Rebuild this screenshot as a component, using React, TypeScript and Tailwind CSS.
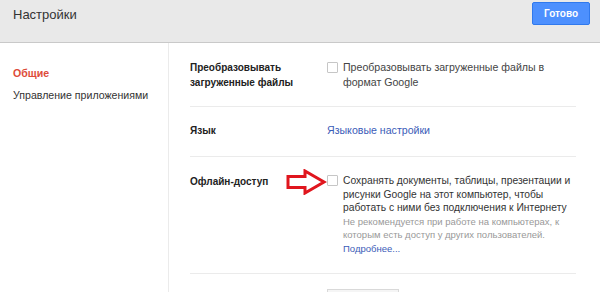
export default function App() {
	return (
		<div className="w-[600px] h-[292px] overflow-hidden bg-white font-['Liberation_Sans',Arial,sans-serif] text-[#222]">
			<header className="h-[43px] bg-[#e9e9e9] border-b border-[#c9c9c9] flex items-start justify-between pl-[13px] pr-[10px]">
				<h1 className="text-[13px] leading-[16px] mt-[7px] text-[#333]">Настройки</h1>
				<button className="mt-[2px] w-[58px] h-[23px] rounded-[2px] bg-[#4d90fe] border border-[#3079ed] text-white text-[10px] font-bold">
					Готово
				</button>
			</header>
			<div className="flex h-[249px]">
				<nav className="w-[169px] border-r border-[#ebebeb] pl-[13px] pt-[22px] text-[10.6px]">
					<div className="text-[#dd4b39] font-bold leading-[16px]">Общие</div>
					<div className="text-[#333] leading-[16px] mt-[6px]">Управление приложениями</div>
				</nav>
				<main className="flex-1 pl-[21px] pr-[24px]">
					<section className="flex border-b border-[#ebebeb] pt-[17px] pb-[16px]">
						<div className="w-[137px] text-[10px] font-bold leading-[15px]">
							Преобразовывать
							<br />
							загруженные файлы
						</div>
						<label className="flex-1 flex items-start gap-[5px] text-[10.6px] leading-[15px] text-[#444]">
							<span className="mt-[2px] w-[11px] h-[11px] shrink-0 border border-[#c6c6c6] rounded-[1px] bg-white" />
							<span>
								Преобразовывать загруженные файлы в
								<br />
								формат Google
							</span>
						</label>
					</section>
					<section className="flex border-b border-[#ebebeb] pt-[16px] pb-[18px]">
						<div className="w-[137px] text-[10px] font-bold leading-[15px]">Язык</div>
						<a className="text-[10.6px] leading-[15px] text-[#3b5cb8]">Языковые настройки</a>
					</section>
					<section className="flex border-b border-[#ebebeb] pt-[17px] pb-[18px]">
						<div className="w-[96px] text-[10px] font-bold leading-[15px]">Офлайн-доступ</div>
						<div className="w-[41px] relative">
							<svg width="41" height="26" viewBox="0 0 41 26" className="absolute left-0 top-[-5px]">
								<path d="M2 7.5 H19 V2 L38 13 L19 24 V18.5 H2 Z" fill="white" stroke="#e0161e" strokeWidth="3" strokeLinejoin="miter" />
							</svg>
						</div>
						<label className="flex-1 flex items-start gap-[5px] whitespace-nowrap">
							<span className="mt-[1px] w-[11px] h-[11px] shrink-0 border border-[#c6c6c6] rounded-[1px] bg-white" />
							<span className="flex flex-col">
								<span className="text-[10.3px] leading-[13.5px] text-[#333]">
									Сохранять документы, таблицы, презентации и
									<br />
									рисунки Google на этот компьютер, чтобы
									<br />
									работать с ними без подключения к Интернету
								</span>
								<span className="text-[9.5px] leading-[13px] text-[#999]">
									Не рекомендуется при работе на компьютерах, к
									<br />
									которым есть доступ у других пользователей.
								</span>
								<a className="text-[9.5px] leading-[13px] text-[#3b5cb8] mt-[1px]">Подробнее...</a>
							</span>
						</label>
					</section>
					<div className="ml-[137px] mt-[15px] w-[72px] h-[10px] border border-[#d9d9d9] bg-[#f5f5f5]" />
				</main>
			</div>
		</div>
	);
}
